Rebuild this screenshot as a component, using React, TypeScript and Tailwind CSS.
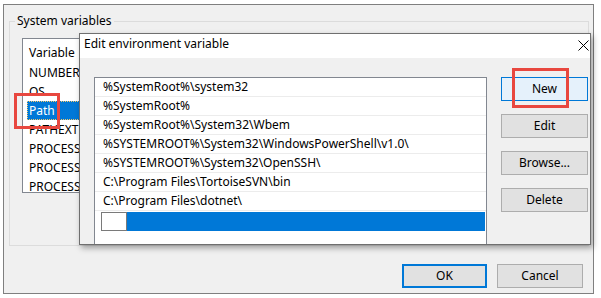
const variables = ["NUMBER_OF_PROCESSORS", "OS", "Path", "PATHEXT", "PROCESSOR_ARCHITECTURE", "PROCESSOR_IDENTIFIER", "PROCESSOR_LEVEL"]

const paths = [
  "%SystemRoot%\\system32",
  "%SystemRoot%",
  "%SystemRoot%\\System32\\Wbem",
  "%SYSTEMROOT%\\System32\\WindowsPowerShell\\v1.0\\",
  "%SYSTEMROOT%\\System32\\OpenSSH\\",
  "C:\\Program Files\\TortoiseSVN\\bin",
  "C:\\Program Files\\dotnet\\",
]

const Button = ({ label, active }: { label: string; active?: boolean }) => (
  <div
    className={
      active
        ? "h-[24px] w-[87px] flex items-center justify-center border border-[#0078d7] bg-[#e5f1fb]"
        : "h-[24px] w-[87px] flex items-center justify-center border border-[#adadad] bg-[#e1e1e1]"
    }
  >
    {label}
  </div>
)

const App = () => {
  return (
    <div className="relative w-[601px] h-[298px] bg-white overflow-hidden text-[12px] text-black font-['Noto_Sans',sans-serif]">
      {/* back window */}
      <div className="absolute left-[3px] top-[4px] w-[591px] h-[290px] border border-[#7f7f7f] bg-[#f0f0f0] flex flex-col">
        <div className="relative shrink-0 ml-[5px] mt-[16px] w-[580px] h-[225px] border border-[#dcdcdc]">
          <span className="absolute left-[5px] -top-[10px] px-[2px] bg-[#f0f0f0] leading-[18px]">System variables</span>
          {/* only the part left of the dialog is visible */}
          <div className="ml-[12px] mt-[16px] w-[58px] h-[155px] border-y border-l border-[#828790] bg-white overflow-hidden">
            <div className="h-[24px] pt-[3px] pl-[6px] flex items-center">Variable</div>
            {variables.map((v) => (
              <div
                key={v}
                className={
                  v === "Path"
                    ? "h-[19px] ml-[4px] pl-[2px] flex items-center bg-[#0078d7] text-white outline outline-1 outline-dotted outline-[#f3c76a] -outline-offset-1"
                    : "h-[19px] pl-[6px] flex items-center whitespace-nowrap overflow-hidden"
                }
              >
                {v}
              </div>
            ))}
          </div>
        </div>
        <div className="mt-auto mb-[5px] mr-[10px] flex justify-end gap-[10px]">
          <div className="h-[24px] w-[85px] flex items-center justify-center border-2 border-[#0078d7] bg-[#e1e1e1]">OK</div>
          <div className="h-[24px] w-[86px] flex items-center justify-center border border-[#adadad] bg-[#e1e1e1]">Cancel</div>
        </div>
      </div>

      {/* edit dialog */}
      <div className="absolute left-[79px] top-[33px] w-[512px] h-[212px] border border-[#6f6f6f] bg-[#f0f0f0] shadow-[2px_3px_6px_rgba(0,0,0,0.35)] overflow-hidden">
        <div className="h-[24px] bg-white flex items-center justify-between pl-[4px] pr-[1px] pb-[4px]">
          <span>Edit environment variable</span>
          <svg width="11" height="11" viewBox="0 0 11 11" className="mt-[2px]">
            <path d="M0.5 0.5 L10.5 10.5 M10.5 0.5 L0.5 10.5" stroke="#000" strokeWidth="1" />
          </svg>
        </div>
        <div className="flex mt-[19px] ml-[14px] gap-[14px]">
          <div className="w-[393px] h-[175px] shrink-0 border border-[#828790] bg-white">
            {paths.map((p) => (
              <div key={p} className="h-[19px] border-b border-[#ececec] px-[8px] flex items-center whitespace-nowrap">
                {p}
              </div>
            ))}
            <div className="h-[19px] flex mt-[1px] ml-[6px] mr-[1px]">
              <div className="w-[26px] border border-[#7a7a7a] bg-white" />
              <div className="flex-1 bg-[#0078d7]" />
            </div>
          </div>
          <div className="flex flex-col gap-[13px]">
            <Button label="New" active />
            <Button label="Edit" />
            <Button label="Browse..." />
            <Button label="Delete" />
          </div>
        </div>
      </div>

      {/* annotations */}
      <div className="absolute left-[14px] top-[93px] w-[46px] h-[36px] border-[3px] border-[#e8473f]" />
      <div className="absolute left-[512px] top-[68px] w-[57px] h-[40px] border-[3px] border-[#e8473f]" />
    </div>
  )
}

export default App
